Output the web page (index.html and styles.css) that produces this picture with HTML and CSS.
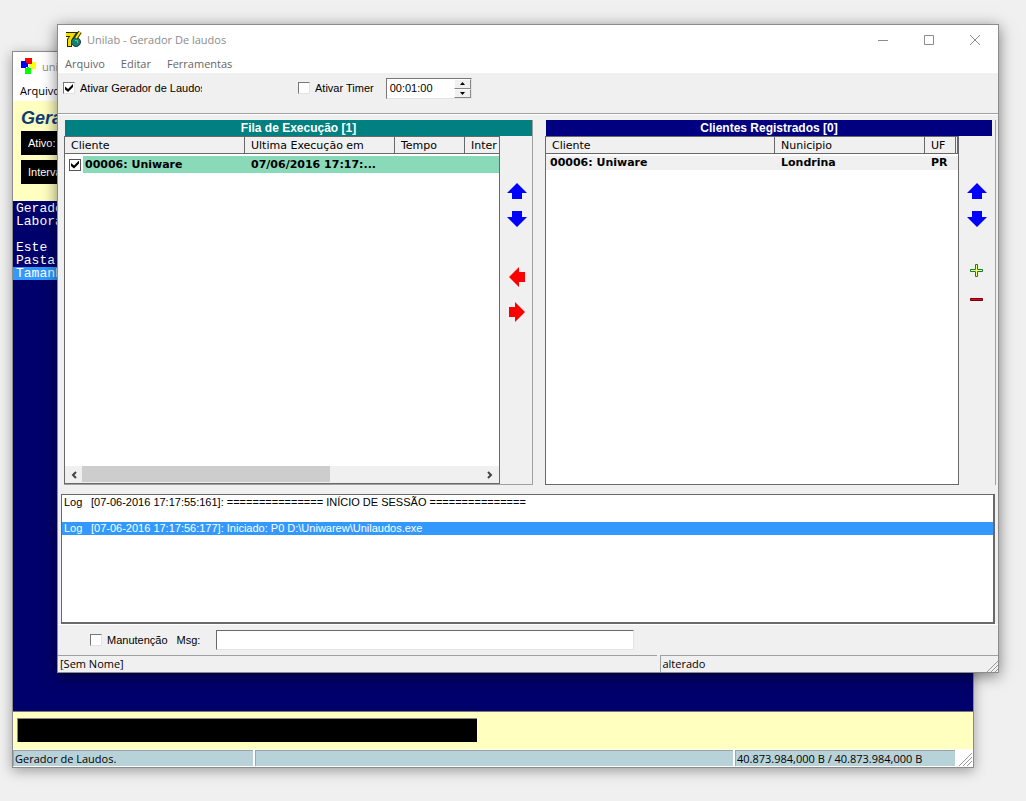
FILE: index.html
```html
<!DOCTYPE html>
<html lang="pt-BR">
<head>
<meta charset="utf-8">
<title>Unilab - Gerador De laudos</title>
<link rel="stylesheet" href="styles.css">
</head>
<body>
<svg class="defs" aria-hidden="true">
  <symbol id="arrow" viewBox="0 0 20 20"><path d="M10 2L20 12H15V18H5V12H0Z"/></symbol>
</svg>

<section class="window window-back" aria-label="unilab">
  <header class="titlebar">
    <svg class="app-icon" viewBox="0 0 17 17" shape-rendering="crispEdges">
      <path fill="#f00" d="M5 0h7v5h-7z"/><path fill="#00f" d="M1 3h5v2h2v4h-2v1h-5z"/>
      <path fill="#ff0" d="M11 4h5v7h-5v-2h-2v-4h2z"/><path fill="#0f0" d="M5 10h2v-1h2v1h2v6h-6z"/>
      <path fill="#f00" d="M8 4h4v2h-4z"/>
    </svg>
    <span>unilab</span>
  </header>
  <nav class="menubar"><button type="button">Arquivo</button></nav>
  <div class="banner">
    <h1>Gerador</h1>
    <p class="readout">Ativo:</p>
    <p class="readout">Intervalo</p>
  </div>
  <ul class="console">
    <li>Gerador</li>
    <li>Labora</li>
    <li></li>
    <li>Este</li>
    <li>Pasta</li>
    <li class="selected">Tamanho</li>
  </ul>
  <div class="progress-strip"><div class="progress-box"></div></div>
  <footer class="statusbar">
    <span class="cell cell-name">Gerador de Laudos.</span>
    <span class="cell cell-empty"></span>
    <span class="cell cell-size">40.873.984,000 B / 40.873.984,000 B</span>
    <svg class="grip" viewBox="0 0 14 14"><path d="M1 14L14 1M5 14L14 5M9 14L14 9"/></svg>
  </footer>
</section>

<main class="window window-front">
  <header class="titlebar">
    <svg class="app-icon" viewBox="0 0 17 17">
      <path fill="none" stroke="#2a2a00" stroke-width="5" d="M1 3.500H9L4.500 9V16"/>
      <circle cx="11" cy="11" r="4.500" fill="#158070" stroke="#173b34"/>
      <path fill="none" stroke="#63bda7" d="M10 9.500h2.500v2.500"/>
      <path fill="none" stroke="#343400" stroke-width="4" d="M11 7l4-6"/>
      <path fill="none" stroke="#ffe900" stroke-width="2" d="M11 7l4-6"/>
      <path fill="none" stroke="#f0e000" stroke-width="3" d="M1 3.500H8L4.500 9V15"/>
    </svg>
    <span class="window-title">Unilab - Gerador De laudos</span>
    <div class="window-controls">
      <button type="button" aria-label="Minimizar"><svg viewBox="0 0 12 12"><path d="M1 6.500h10"/></svg></button>
      <button type="button" aria-label="Maximizar"><svg viewBox="0 0 12 12"><path d="M1.500 1.500h9v9h-9z"/></svg></button>
      <button type="button" aria-label="Fechar"><svg viewBox="0 0 12 12"><path d="M1 1l10 10M11 1L1 11"/></svg></button>
    </div>
  </header>
  <nav class="menubar">
    <button type="button">Arquivo</button>
    <button type="button">Editar</button>
    <button type="button">Ferramentas</button>
  </nav>

  <div class="toolbar">
    <label class="check check-generator"><input type="checkbox" checked><span>Ativar Gerador de Laudos</span></label>
    <label class="check"><input type="checkbox"><span>Ativar Timer</span></label>
    <div class="spinner">
      <input type="text" value="00:01:00" aria-label="Intervalo do timer">
      <div class="spinner-buttons">
        <button type="button" aria-label="Aumentar"><svg viewBox="0 0 5 3"><path d="M2.500 0L5 3H0Z"/></svg></button>
        <button type="button" aria-label="Diminuir"><svg viewBox="0 0 5 3"><path d="M2.500 3L5 0H0Z"/></svg></button>
      </div>
    </div>
  </div>

  <div class="panels">
    <section class="panel panel-queue">
      <h2>Fila de Execução [1]</h2>
      <div class="panel-body">
        <div class="list">
          <div class="table-area">
            <table class="queue-table">
              <colgroup><col class="col-180"><col class="col-150"><col class="col-70"><col class="col-70"></colgroup>
              <thead><tr><th>Cliente</th><th>Ultima Execução em</th><th>Tempo</th><th>Inter</th></tr></thead>
              <tbody><tr>
                <td class="check-cell"><label class="check"><input type="checkbox" checked><span>00006: Uniware</span></label></td>
                <td>07/06/2016 17:17:...</td><td></td><td></td>
              </tr></tbody>
            </table>
          </div>
          <div class="scrollbar">
            <button type="button" aria-label="Rolar para a esquerda"><svg viewBox="0 0 8 8"><path d="M6 1L3 4l3 3"/></svg></button>
            <div class="track"><div class="thumb"></div></div>
            <button type="button" aria-label="Rolar para a direita"><svg viewBox="0 0 8 8"><path d="M2 1l3 3-3 3"/></svg></button>
          </div>
        </div>
        <div class="side">
          <button type="button" aria-label="Mover para cima"><svg class="blue"><use href="#arrow"/></svg></button>
          <button type="button" aria-label="Mover para baixo"><svg class="blue down"><use href="#arrow"/></svg></button>
          <button type="button" class="gap-large" aria-label="Adicionar à fila"><svg class="red left"><use href="#arrow"/></svg></button>
          <button type="button" class="gap-small" aria-label="Remover da fila"><svg class="red right"><use href="#arrow"/></svg></button>
        </div>
      </div>
    </section>

    <section class="panel panel-clients">
      <h2>Clientes Registrados [0]</h2>
      <div class="panel-body">
        <div class="list">
          <div class="table-area">
            <table class="clients-table">
              <colgroup><col><col class="col-150"><col class="col-31"><col class="col-2"></colgroup>
              <thead><tr><th>Cliente</th><th>Nunicipio</th><th>UF</th><th class="filler"></th></tr></thead>
              <tbody><tr><td>00006: Uniware</td><td>Londrina</td><td>PR</td><td class="filler"></td></tr></tbody>
            </table>
          </div>
        </div>
        <div class="side">
          <button type="button" aria-label="Mover para cima"><svg class="blue"><use href="#arrow"/></svg></button>
          <button type="button" aria-label="Mover para baixo"><svg class="blue down"><use href="#arrow"/></svg></button>
          <button type="button" class="gap-medium" aria-label="Adicionar cliente"><svg viewBox="0 0 20 20"><path class="plus" d="M8.500 3.500h2v5h5v2h-5v5h-2v-5h-5v-2h5z"/></svg></button>
          <button type="button" aria-label="Remover cliente"><svg viewBox="0 0 20 20"><path class="minus" d="M3.500 9.500h12v2h-12z"/></svg></button>
        </div>
      </div>
    </section>
  </div>

  <ul class="log">
    <li><span class="kind">Log</span>[07-06-2016 17:17:55:161]: =============== INÍCIO DE SESSÃO ===============</li>
    <li></li>
    <li class="selected"><span class="kind">Log</span>[07-06-2016 17:17:56:177]: Iniciado: P0 D:\Uniwarew\Unilaudos.exe</li>
  </ul>

  <div class="message-bar">
    <label class="check"><input type="checkbox"><span>Manutenção</span></label>
    <label class="message-label" for="msg">Msg:</label>
    <input class="message-field" id="msg" type="text">
  </div>
  <footer class="statusbar">
    <span class="cell cell-file">[Sem Nome]</span>
    <span class="cell cell-state">alterado</span>
    <svg class="grip" viewBox="0 0 14 14"><path d="M3 14L14 3M7 14L14 7M11 14L14 11"/></svg>
  </footer>
</main>
</body>
</html>
```
FILE: styles.css
```css
* { box-sizing: border-box; }
html, body { height: 100%; }
body {
  position: relative;
  margin: 0;
  overflow: hidden;
  background: #f0f0f0;
  color: #000;
  font: 11px/13px "Liberation Sans", Arial, sans-serif;
}
h1, h2, p, ul { margin: 0; padding: 0; }
ul { list-style: none; }
button { margin: 0; padding: 0; border: 0; background: none; color: inherit; font: inherit; }
input { margin: 0; font: inherit; color: inherit; border-radius: 0; outline: 0; }
svg { display: block; flex: none; }
.defs { position: absolute; width: 0; height: 0; }

/* Windows */
.window {
  position: absolute;
  display: flex;
  flex-direction: column;
  border: 1px solid #8c8c8c;
  background: #f0f0f0;
}
.window-back { inset: 51px 52px 33px 12px; box-shadow: 0 3px 12px rgba(0, 0, 0, .35); }
.window-front { inset: 24px 27px 128px 57px; box-shadow: 0 3px 14px rgba(0, 0, 0, .5); }

.titlebar {
  display: flex;
  flex: none;
  align-items: center;
  height: 29px;
  padding-left: 7px;
  background: #fff;
  color: #8c8c8c;
  font: 11px/16px "Open Sans", sans-serif;
}
.app-icon { width: 17px; height: 17px; margin-right: 5px; }
.window-controls { display: flex; margin-left: auto; }
.window-controls button { display: grid; place-items: center; width: 46px; height: 29px; }
.window-controls svg { width: 12px; height: 12px; fill: none; stroke: #8c8c8c; }
.menubar {
  display: flex;
  flex: none;
  gap: 16px;
  height: 19px;
  padding-left: 7px;
  background: #fff;
  color: #666;
  font: 11px/20px "Open Sans", sans-serif;
}
.window-back .menubar { height: 20px; color: #000; }

/* Back window */
.banner { flex: none; height: 100px; padding: 4px 8px; background: #ffffc0; }
.banner h1 { height: 26px; color: #103c74; font: italic bold 18px/26px "Liberation Sans", Arial, sans-serif; }
.readout { width: 200px; height: 24px; margin-bottom: 5px; padding-left: 7px; background: #000; color: #fff; line-height: 24px; }
.console { flex: 1; padding-top: 1px; background: #00006c; color: #fff; font: 13px/13px "Liberation Mono", monospace; }
.console li { height: 13px; padding-left: 3px; }
.console .selected { width: 300px; background: #3399ff; }
.progress-strip { flex: none; height: 38px; padding: 6px 4px; border-top: 1px solid #777; background: #ffffc0; }
.progress-box { width: calc(48% + 3px); height: 24px; border: 1px solid #888; border-width: 1px 0 0 1px; background: #000; }

.statusbar { display: flex; flex: none; font: 11px/16px "Open Sans", sans-serif; }
.cell { border-top: 1px solid #a0a0a0; white-space: nowrap; }
.window-back .statusbar { height: 18px; gap: 2px; padding: 1px 0; background: #fff; }
.window-back .cell { padding-left: 1px; border-left: 1px solid #94abb0; background: #b8d2d9; }
.cell-name { width: 25%; }
.cell-empty { flex: 1; }
.cell-size { width: 220px; }
.grip { align-self: flex-end; width: 14px; height: 14px; fill: none; stroke: #999; }
.window-back .grip { width: 16px; }

/* Toolbar */
.toolbar {
  display: flex;
  flex: none;
  height: 41px;
  padding: 5px 5px 4px;
  border-bottom: 1px solid #a0a0a0;
}
.check { display: flex; align-items: center; height: 20px; white-space: nowrap; }
.check span { margin-left: 5px; overflow: hidden; }
.check input {
  position: relative;
  flex: none;
  appearance: none;
  width: 12px;
  height: 12px;
  border: 1px solid #fff;
  border-color: #777 #e3e3e3 #e3e3e3 #777;
  background: #fff;
}
.check input:checked::after {
  content: "";
  position: absolute;
  inset: 1px;
  background: #000;
  clip-path: polygon(0 30%, 38% 62%, 100% 0, 100% 38%, 38% 100%, 0 68%);
}
.check-generator { width: 235px; }
.check-generator span { width: 122px; }
.spinner {
  display: flex;
  width: 86px;
  height: 21px;
  margin-left: 12px;
  border: 1px solid #fff;
  border-color: #777 #e3e3e3 #e3e3e3 #777;
  background: #fff;
}
.spinner input { flex: 1; min-width: 0; padding: 0 3px; border: 0; background: none; }
.spinner-buttons { display: grid; width: 17px; }
.spinner-buttons button { display: grid; place-items: center; border: 1px solid #fff; border-color: #fff #888 #888 #fff; background: #f0f0f0; }
.spinner-buttons svg { width: 5px; height: 3px; }

/* Panels */
.panels { display: flex; flex: 1; min-height: 0; gap: 12px; padding: 5px 2px 9px 6px; border-top: 1px solid #fff; }
.panel { display: flex; flex-direction: column; min-width: 0; border-right: 1px solid #a0a0a0; }
.panel-queue { flex: 469 1 0; border-bottom: 1px solid #a0a0a0; }
.panel-clients { flex: 451 1 0; }
.panel h2 {
  flex: none;
  height: 16px;
  margin-left: 1px;
  background: #008080;
  color: #fff;
  font: bold 12px/16px "Liberation Sans", Arial, sans-serif;
  text-align: center;
}
.panel-clients h2 { margin-right: 3px; background: #000080; }
.panel-body { display: flex; flex: 1; min-height: 0; }
.list {
  display: flex;
  flex: 1;
  flex-direction: column;
  min-width: 0;
  border: 1px solid #696969;
  background: #fff;
}
.table-area { flex: 1; overflow: hidden; }
table { border-collapse: separate; border-spacing: 0; table-layout: fixed; font: 11px/14px "DejaVu Sans", Verdana, sans-serif; }
.queue-table { width: 470px; }
.clients-table { width: 100%; }
.col-180 { width: 180px; }
.col-150 { width: 150px; }
.col-70 { width: 70px; }
.col-31 { width: 31px; }
.col-2 { width: 2px; }
th {
  height: 17px;
  padding: 1px 0 0 6px;
  border-right: 1px solid #696969;
  border-bottom: 1px solid #696969;
  background: #f0f0f0;
  font-weight: normal;
  text-align: left;
  white-space: nowrap;
}
td { height: 16px; padding: 0 0 0 6px; background: #f0f0f0; font-weight: bold; white-space: nowrap; }
.clients-table td { border-top: 2px solid #fff; }
.clients-table td:first-child { padding-left: 4px; }
.queue-table td { height: 19px; border-top: 2px solid #fff; background: #8adaba; }
.queue-table .check-cell { padding: 0; background: linear-gradient(90deg, #fff 18px, #8adaba 18px); }
.check-cell .check { height: 17px; padding-left: 4px; }
.check-cell .check span { margin-left: 4px; }
.check-cell .check input { border-color: #555; }
th.filler, td.filler { padding: 0; }

.scrollbar { display: flex; flex: none; height: 17px; background: #f0f0f0; }
.scrollbar button { display: grid; place-items: center; width: 17px; }
.scrollbar svg { width: 8px; height: 8px; fill: none; stroke: #444; stroke-width: 2; }
.track { flex: 1; }
.thumb { width: 62%; height: 16px; background: #cdcdcd; }

.side { display: flex; flex: none; flex-direction: column; align-items: center; width: 32px; padding: 44px 0 0 2px; gap: 8px; border-top: 1px solid #f0f0f0; }
.side button { width: 20px; height: 20px; }
.panel-clients .side { width: 36px; padding-left: 0; }
.side svg { width: 20px; height: 20px; }
.side .blue { fill: #00f; }
.side .red { fill: #f00; }
.down { transform: rotate(180deg); }
.left { transform: rotate(-90deg); }
.right { transform: rotate(90deg); }
.side .gap-large { margin-top: 30px; }
.side .gap-small { margin-top: 7px; }
.side .gap-medium { margin-top: 24px; }
.plus { fill: #ffff80; stroke: #108030; }
.minus { fill: #f00020; stroke: #700010; }

/* Log and footer */
.log { flex: none; height: 130px; margin: 0 3px; padding-top: 1px; border: 1px solid #696969; border-right-width: 2px; border-bottom-width: 2px; background: #fff; }
.log li { display: flex; height: 13px; padding-left: 2px; white-space: pre; }
.log .selected { background: #3399ff; color: #fff; }
.kind { width: 27px; }
.message-bar { display: flex; flex: none; align-items: center; height: 31px; padding-left: 32px; border-top: 1px solid #fff; }
.message-label { width: 39px; margin-left: 9px; }
.message-field { width: 418px; height: 20px; border: 1px solid #fff; border-color: #696969 #e3e3e3 #e3e3e3 #696969; background: #fff; }
.window-front .statusbar { height: 17px; gap: 3px; line-height: 15px; }
.cell-file { flex: 600 1 0; padding-left: 2px; }
.cell-state { flex: 337 1 0; padding-left: 1px; border-left: 1px solid #a0a0a0; }
.window-front .grip { margin-left: -17px; }
```
